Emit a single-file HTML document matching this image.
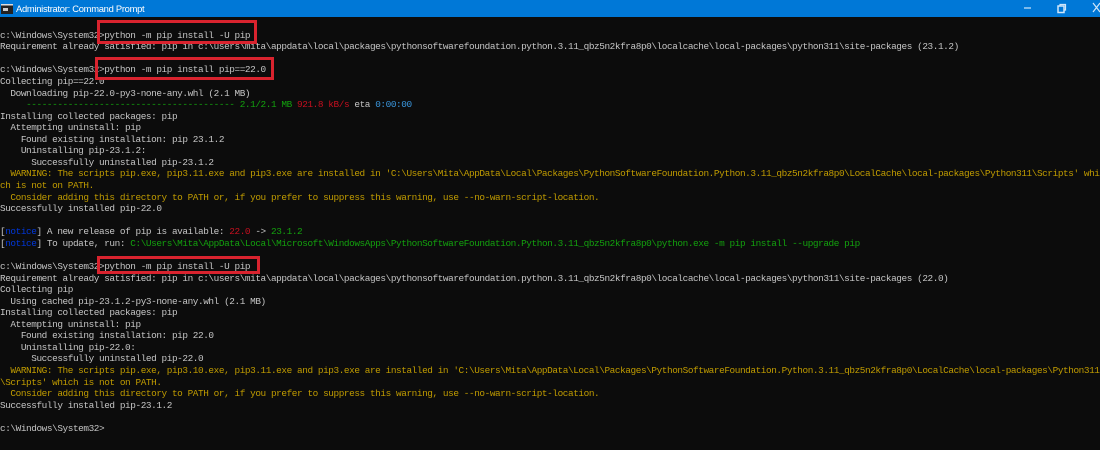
<!DOCTYPE html>
<html><head><meta charset="utf-8"><style>
html,body{margin:0;padding:0;width:1100px;height:450px;overflow:hidden;background:#0c0c0c}
#bar{position:absolute;left:0;top:0;width:1100px;height:17px;background:#0078d7}
#title{position:absolute;left:16px;top:3px;font:9.4px/12px "Liberation Sans",sans-serif;letter-spacing:-.28px;color:#fff;white-space:pre;filter:blur(.25px)}
#t{position:absolute;left:0;top:29.7px;margin:0;font:9.4px/11.56px "Liberation Mono",monospace;letter-spacing:-.415px;color:#c6c6c6;white-space:pre;width:1100px;overflow:hidden;filter:blur(.3px)}
.y{color:#c19c00}.g{color:#13a10e}.r{color:#c50f1f}.b{color:#0037da}
.box{position:absolute;border:3px solid #d9232e;box-sizing:border-box}
</style></head><body>
<div id="bar"></div>
<svg style="position:absolute;left:1px;top:4px" width="12" height="10"><rect width="12" height="10" fill="#222"/><rect x="0" y="0" width="12" height="1.5" fill="#ddd"/><rect x="2" y="4" width="5" height="3" fill="#ccc"/></svg>
<div id="title">Administrator: Command Prompt</div>
<svg style="position:absolute;left:1020px;top:2px" width="80" height="14" fill="none" stroke="#cfe6fa" stroke-width="1.2"><path d="M4 6h7"/><rect x="38" y="4" width="6" height="6.5" stroke-width="1.5"/><path d="M40 4V2.5h5.5V8H44"/><path d="M73 1l7 9M80 1l-7 9"/></svg>
<pre id="t">c:\Windows\System32&gt;python -m pip install -U pip
Requirement already satisfied: pip in c:\users\mita\appdata\local\packages\pythonsoftwarefoundation.python.3.11_qbz5n2kfra8p0\localcache\local-packages\python311\site-packages (23.1.2)

c:\Windows\System32&gt;python -m pip install pip==22.0
Collecting pip==22.0
  Downloading pip-22.0-py3-none-any.whl (2.1 MB)
     <span class="g">---------------------------------------- 2.1/2.1 MB</span> <span class="r">921.8 kB/s</span> eta <span style="color:#3a96dd">0:00:00</span>
Installing collected packages: pip
  Attempting uninstall: pip
    Found existing installation: pip 23.1.2
    Uninstalling pip-23.1.2:
      Successfully uninstalled pip-23.1.2
<span class="y">  WARNING: The scripts pip.exe, pip3.11.exe and pip3.exe are installed in 'C:\Users\Mita\AppData\Local\Packages\PythonSoftwareFoundation.Python.3.11_qbz5n2kfra8p0\LocalCache\local-packages\Python311\Scripts' whi
ch is not on PATH.
  Consider adding this directory to PATH or, if you prefer to suppress this warning, use --no-warn-script-location.</span>
Successfully installed pip-22.0

[<span class="b">notice</span>] A new release of pip is available: <span class="r">22.0</span> -&gt; <span class="g">23.1.2</span>
[<span class="b">notice</span>] To update, run: <span class="g">C:\Users\Mita\AppData\Local\Microsoft\WindowsApps\PythonSoftwareFoundation.Python.3.11_qbz5n2kfra8p0\python.exe -m pip install --upgrade pip</span>

c:\Windows\System32&gt;python -m pip install -U pip
Requirement already satisfied: pip in c:\users\mita\appdata\local\packages\pythonsoftwarefoundation.python.3.11_qbz5n2kfra8p0\localcache\local-packages\python311\site-packages (22.0)
Collecting pip
  Using cached pip-23.1.2-py3-none-any.whl (2.1 MB)
Installing collected packages: pip
  Attempting uninstall: pip
    Found existing installation: pip 22.0
    Uninstalling pip-22.0:
      Successfully uninstalled pip-22.0
<span class="y">  WARNING: The scripts pip.exe, pip3.10.exe, pip3.11.exe and pip3.exe are installed in 'C:\Users\Mita\AppData\Local\Packages\PythonSoftwareFoundation.Python.3.11_qbz5n2kfra8p0\LocalCache\local-packages\Python311
\Scripts' which is not on PATH.
  Consider adding this directory to PATH or, if you prefer to suppress this warning, use --no-warn-script-location.</span>
Successfully installed pip-23.1.2

c:\Windows\System32&gt;</pre>
<div class="box" style="left:97px;top:20px;width:160px;height:24px"></div>
<div class="box" style="left:95px;top:57px;width:179px;height:23px"></div>
<div class="box" style="left:97px;top:256px;width:163px;height:18px"></div>
</body></html>
